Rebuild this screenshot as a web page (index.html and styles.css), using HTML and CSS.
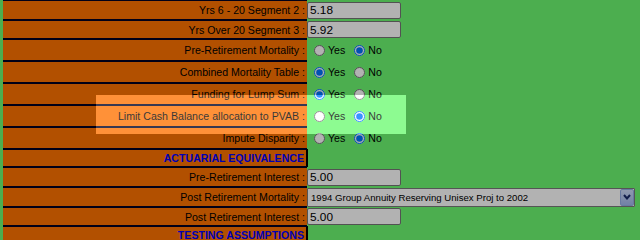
FILE: index.html
```html
<!DOCTYPE html>
<html>
<head>
<meta charset="utf-8">
<link rel="stylesheet" href="styles.css">
</head>
<body>
<div class="form">
  <div class="row h20">
    <div class="label">Yrs 6 - 20 Segment 2 :</div>
    <div class="field"><input class="num" value="5.18"></div>
  </div>
  <div class="row h19">
    <div class="label">Yrs Over 20 Segment 3 :</div>
    <div class="field"><input class="num" value="5.92"></div>
  </div>
  <div class="row h22">
    <div class="label">Pre-Retirement Mortality :</div>
    <div class="field radios">
      <label class="opt"><input type="radio" name="prm">Yes</label>
      <label class="opt"><input type="radio" name="prm" checked>No</label>
    </div>
  </div>
  <div class="row h22">
    <div class="label">Combined Mortality Table :</div>
    <div class="field radios">
      <label class="opt"><input type="radio" name="cmt" checked>Yes</label>
      <label class="opt"><input type="radio" name="cmt">No</label>
    </div>
  </div>
  <div class="row h22">
    <div class="label">Funding for Lump Sum :</div>
    <div class="field radios">
      <label class="opt"><input type="radio" name="fls" checked>Yes</label>
      <label class="opt"><input type="radio" name="fls">No</label>
    </div>
  </div>
  <div class="row h22">
    <div class="label">Limit Cash Balance allocation to PVAB :</div>
    <div class="field radios">
      <label class="opt"><input type="radio" name="lcb">Yes</label>
      <label class="opt"><input type="radio" name="lcb" checked>No</label>
    </div>
  </div>
  <div class="row h22">
    <div class="label">Impute Disparity :</div>
    <div class="field radios">
      <label class="opt"><input type="radio" name="imp">Yes</label>
      <label class="opt"><input type="radio" name="imp" checked>No</label>
    </div>
  </div>
  <div class="row head h18">
    <div class="label">ACTUARIAL EQUIVALENCE</div>
    <div class="field"></div>
  </div>
  <div class="row h20">
    <div class="label">Pre-Retirement Interest :</div>
    <div class="field"><input class="num" value="5.00"></div>
  </div>
  <div class="row h20">
    <div class="label">Post Retirement Mortality :</div>
    <div class="field">
      <div class="select">
        <span class="val">1994 Group Annuity Reserving Unisex Proj to 2002</span>
        <span class="arrow"><svg width="8" height="6" viewBox="0 0 8 6"><polyline points="1,1 4,4.5 7,1" fill="none" stroke="#1b2b6b" stroke-width="2"/></svg></span>
      </div>
    </div>
  </div>
  <div class="row h19">
    <div class="label">Post Retirement Interest :</div>
    <div class="field"><input class="num" value="5.00"></div>
  </div>
  <div class="row head h18">
    <div class="label">TESTING ASSUMPTIONS</div>
    <div class="field"></div>
  </div>
</div>
<div class="spotlight"></div>
</body>
</html>
```

FILE: styles.css
```css
html, body {
  margin: 0;
  height: 240px;
  overflow: hidden;
}
body {
  background: #6dfa72;
  font-family: "Liberation Sans", Arial, sans-serif;
  color: #000;
}
.form {
  margin-left: 3px;
  width: 632px;
}
.row {
  display: grid;
  grid-template-columns: 304px 1fr;
}
.h18 { height: 18px; }
.h19 { height: 19px; }
.h20 { height: 20px; }
.h22 { height: 22px; }
.label {
  box-sizing: border-box;
  background: #ff7300;
  border-top: 1px solid #000022;
  border-bottom: 1px solid #000022;
  display: flex;
  align-items: center;
  justify-content: flex-end;
  padding-right: 2px;
  font-size: 10.6px;
  white-space: nowrap;
}
.head {
  grid-template-columns: 305px 1fr;
}
.head .label {
  color: #0000ff;
  font-weight: bold;
  border-right: 2px solid #000;
}
.field {
  display: flex;
  align-items: center;
}
.num {
  box-sizing: border-box;
  width: 94px;
  height: 17px;
  margin: 0;
  border: 1px solid #767676;
  border-radius: 2px;
  padding: 0 2px;
  font: 11.8px "Liberation Sans", Arial, sans-serif;
  background: #fff;
  color: #000;
}
.radios {
  padding-left: 7px;
  font-size: 10.6px;
}
.opt {
  display: flex;
  align-items: center;
  gap: 3px;
}
.opt + .opt {
  margin-left: 9px;
}
.opt input {
  width: 11px;
  height: 11px;
  margin: 0;
}
.select {
  box-sizing: border-box;
  width: 328px;
  height: 19px;
  border: 1px solid #7a7a7a;
  border-radius: 1px;
  background: #fff;
  display: flex;
  align-items: stretch;
  font-size: 9.6px;
}
.select .val {
  flex: 1;
  padding-left: 3px;
  display: flex;
  align-items: center;
}
.select .arrow {
  box-sizing: border-box;
  width: 14px;
  margin: 0;
  background: linear-gradient(#cfdcfa, #a3b9ee);
  border: 1px solid #95aee6;
  border-radius: 2px;
  display: flex;
  align-items: center;
  justify-content: center;
}
.spotlight {
  position: absolute;
  left: 96px;
  top: 95px;
  width: 310px;
  height: 39px;
  background: rgba(255, 255, 255, 0.22);
  box-shadow: 0 0 0 2000px rgba(0, 0, 0, 0.3);
  pointer-events: none;
}
```
